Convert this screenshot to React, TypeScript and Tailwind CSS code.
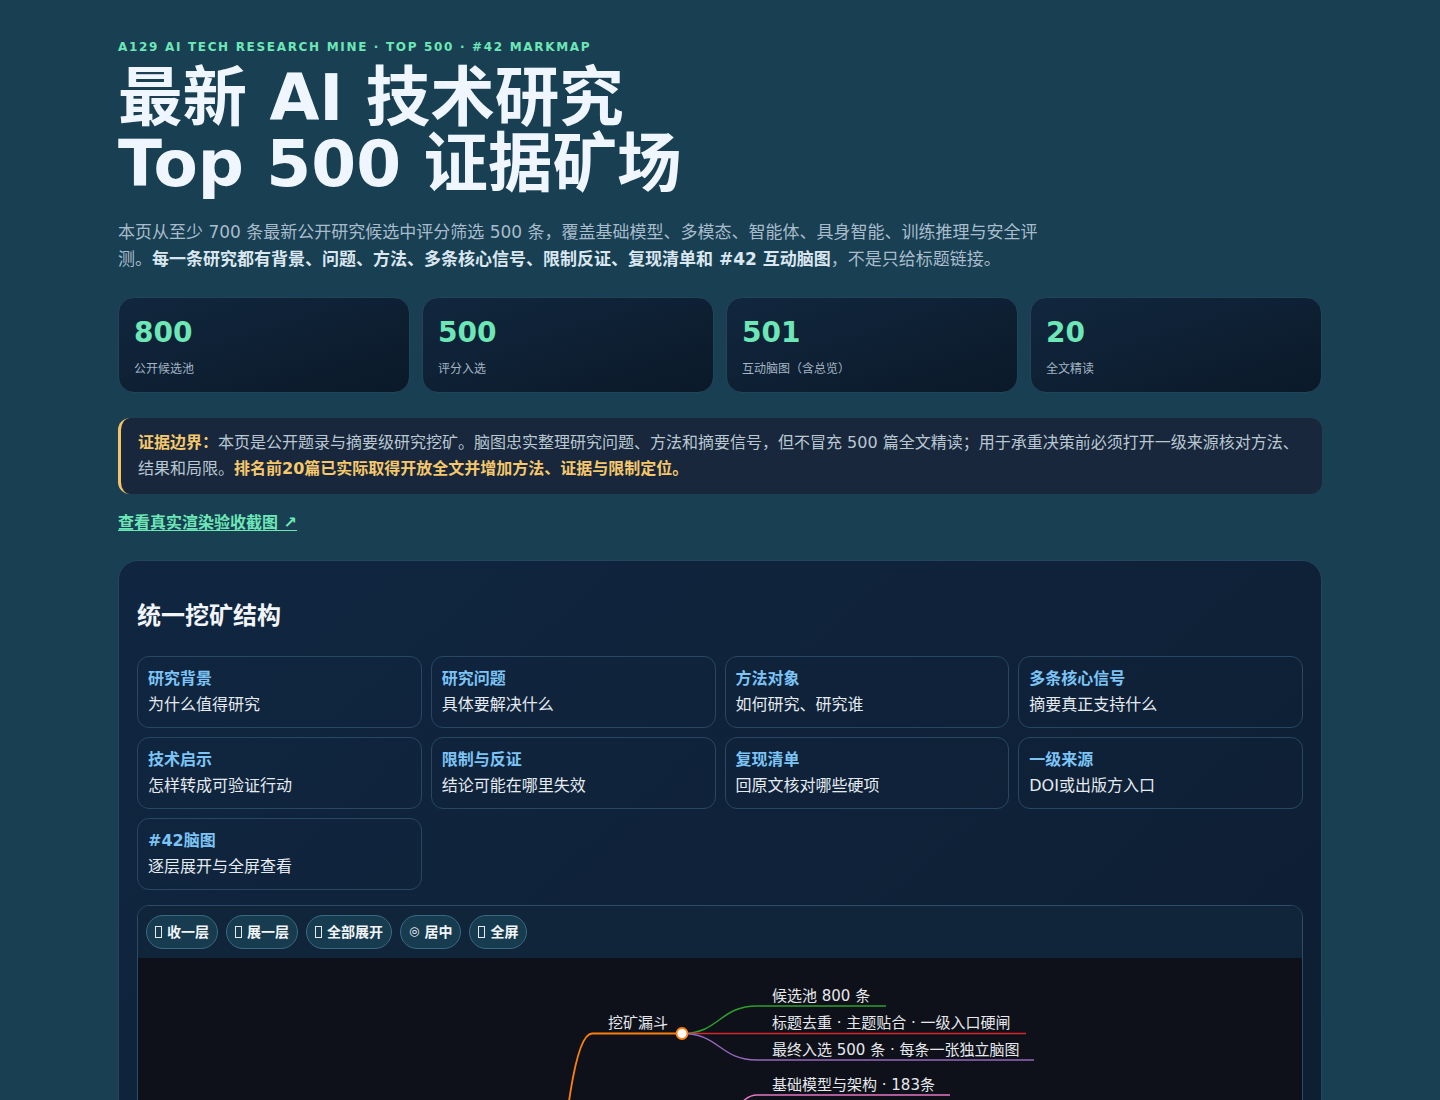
import React from "react";

const stats = [
  { n: "800", l: "公开候选池" },
  { n: "500", l: "评分入选" },
  { n: "501", l: "互动脑图（含总览）" },
  { n: "20", l: "全文精读" },
];

const cells = [
  { t: "研究背景", d: "为什么值得研究" },
  { t: "研究问题", d: "具体要解决什么" },
  { t: "方法对象", d: "如何研究、研究谁" },
  { t: "多条核心信号", d: "摘要真正支持什么" },
  { t: "技术启示", d: "怎样转成可验证行动" },
  { t: "限制与反证", d: "结论可能在哪里失效" },
  { t: "复现清单", d: "回原文核对哪些硬项" },
  { t: "一级来源", d: "DOI或出版方入口" },
  { t: "#42脑图", d: "逐层展开与全屏查看" },
];

const Tofu = () => (
  <span className="inline-block w-[7px] h-[12px] border border-[#e5edf3] mr-[5px]" />
);

const buttons: { icon: React.ReactNode; label: string }[] = [
  { icon: <Tofu />, label: "收一层" },
  { icon: <Tofu />, label: "展一层" },
  { icon: <Tofu />, label: "全部展开" },
  { icon: <span className="mr-[5px] text-[12px] font-normal">◎</span>, label: "居中" },
  { icon: <Tofu />, label: "全屏" },
];

function MindMap() {
  const txt = {
    fill: "#e6e8ec",
    fontSize: 15,
    fontFamily: "'DejaVu Sans','Noto Sans CJK SC',sans-serif",
  } as const;
  return (
    <svg width="1164" height="620" viewBox="0 0 1164 620" className="block">
      <path d="M382,442 C418,442 418,75.5 454,75.5" fill="none" stroke="#ff7f0e" strokeWidth="1.8" />
      <path d="M454,75.5 L544,75.5" fill="none" stroke="#ff7f0e" strokeWidth="1.8" />
      <text x="470" y="70" style={txt}>挖矿漏斗</text>

      <path d="M544,75.5 C581.5,75.5 581.5,48 619,48 L748,48" fill="none" stroke="#2ca02c" strokeWidth="1.5" />
      <text x="634" y="43" style={txt}>候选池 800 条</text>

      <path d="M544,75.5 L888,75.5" fill="none" stroke="#d62728" strokeWidth="1.5" />
      <text x="634" y="70" style={txt}>标题去重 · 主题贴合 · 一级入口硬闸</text>

      <path d="M544,75.5 C581.5,75.5 581.5,102 619,102 L896,102" fill="none" stroke="#9467bd" strokeWidth="1.5" />
      <text x="634" y="97" style={txt}>最终入选 500 条 · 每条一张独立脑图</text>

      <circle cx="544" cy="75.5" r="5.5" fill="#ffffff" stroke="#ff7f0e" strokeWidth="1.8" />

      <path d="M382,442 C418,442 418,250 454,250 L544,250" fill="none" stroke="#8c564b" strokeWidth="1.8" />
      <text x="470" y="245" style={txt}>研究方向</text>
      <path d="M544,250 C581.5,250 581.5,137 619,137 L812,137" fill="none" stroke="#e377c2" strokeWidth="1.5" />
      <text x="634" y="132" style={txt}>基础模型与架构 · 183条</text>
      <path d="M544,250 C581.5,250 581.5,172 619,172 L800,172" fill="none" stroke="#7f7f7f" strokeWidth="1.5" />
      <text x="634" y="167" style={txt}>多模态理解与生成 · 96条</text>
      <path d="M544,250 C581.5,250 581.5,207 619,207 L780,207" fill="none" stroke="#bcbd22" strokeWidth="1.5" />
      <text x="634" y="202" style={txt}>智能体与工具 · 88条</text>
      <path d="M544,250 C581.5,250 581.5,242 619,242 L760,242" fill="none" stroke="#17becf" strokeWidth="1.5" />
      <text x="634" y="237" style={txt}>具身智能 · 52条</text>
      <circle cx="544" cy="250" r="5.5" fill="#ffffff" stroke="#8c564b" strokeWidth="1.8" />

      <path d="M220,442 L382,442" fill="none" stroke="#1f77b4" strokeWidth="2" />
      <text x="236" y="437" style={txt}>A129 · Top 500</text>
      <circle cx="382" cy="442" r="5.5" fill="#ffffff" stroke="#1f77b4" strokeWidth="1.8" />
    </svg>
  );
}

export default function App() {
  return (
    <div className="min-h-[1100px] bg-[#183f52] font-['DejaVu_Sans','Noto_Sans_CJK_SC',sans-serif]">
      <div className="w-[1204px] mx-auto pt-[39px] pb-10">
        <div className="text-xs leading-4 font-bold tracking-[0.14em] text-[#6ee7b7]">
          A129 AI TECH RESEARCH MINE · TOP 500 · #42 MARKMAP
        </div>
        <h1 className="mt-[10px] text-[64.5px] leading-[66px] font-bold text-[#f0f6ff]">
          最新 AI 技术研究
          <br />
          Top 500 证据矿场
        </h1>
        <p className="mt-[22px] max-w-[925px] text-[17px] leading-[27px] text-[#a9bccb]">
          本页从至少 700 条最新公开研究候选中评分筛选 500 条，覆盖基础模型、多模态、智能体、具身智能、训练推理与安全评测。
          <b className="text-[#dbe7f0]">每一条研究都有背景、问题、方法、多条核心信号、限制反证、复现清单和 #42 互动脑图</b>
          ，不是只给标题链接。
        </p>

        <div className="mt-[24px] grid grid-cols-4 gap-3">
          {stats.map((s) => (
            <div
              key={s.n}
              className="rounded-2xl border border-[#21445b] bg-gradient-to-br from-[#11273e] to-[#0b1929] px-[15px] pt-[18px] pb-[14px]"
            >
              <div className="text-[28px] leading-[34px] font-bold text-[#6ee7b7]">{s.n}</div>
              <div className="mt-[10px] text-xs leading-[18px] text-[#a3b5c4]">{s.l}</div>
            </div>
          ))}
        </div>

        <div className="mt-[25px] rounded-xl border-l-[3px] border-[#f5c46a] bg-[#18273b] pl-[17px] pr-4 py-3 text-base leading-[26px] text-[#b9c7d3]">
          <b className="text-[#f6c86c]">证据边界：</b>
          本页是公开题录与摘要级研究挖矿。脑图忠实整理研究问题、方法和摘要信号，但不冒充 500 篇全文精读；用于承重决策前必须打开一级来源核对方法、结果和局限。
          <b className="text-[#f6c86c]">排名前20篇已实际取得开放全文并增加方法、证据与限制定位。</b>
        </div>

        <div className="mt-[17px] leading-[22px]">
          <a href="#" className="text-base font-bold text-[#6ee7b7] underline underline-offset-2">
            查看真实渲染验收截图 ↗
          </a>
        </div>

        <section className="mt-[25px] rounded-[20px] border border-[#25445d] bg-gradient-to-br from-[#102640] to-[#0d1c2f] px-[18px] pt-[39px] pb-10">
          <h2 className="text-2xl leading-8 font-bold text-[#f1f5f9]">统一挖矿结构</h2>
          <div className="mt-[24px] grid grid-cols-4 gap-[9px]">
            {cells.map((c) => (
              <div
                key={c.t}
                className="rounded-xl border border-[#284861] px-[10px] pt-[10px] pb-[10px]"
              >
                <div className="text-base leading-6 font-bold text-[#7cc4f5]">{c.t}</div>
                <div className="mt-[2px] text-base leading-6 text-[#e5ebf1]">{c.d}</div>
              </div>
            ))}
          </div>

          <div className="mt-[15px] overflow-hidden rounded-t-xl border border-[#2d4b64]">
            <div className="flex gap-2 bg-[#10243a] px-2 py-[9px]">
              {buttons.map((b) => (
                <button
                  key={b.label}
                  className="flex h-[34px] items-center rounded-full border border-[#3a6a82] bg-[#173c50] px-2 text-sm font-bold text-[#f1f5f9]"
                >
                  {b.icon}
                  {b.label}
                </button>
              ))}
            </div>
            <div className="bg-[#0e111a]">
              <MindMap />
            </div>
          </div>
        </section>
      </div>
    </div>
  );
}
